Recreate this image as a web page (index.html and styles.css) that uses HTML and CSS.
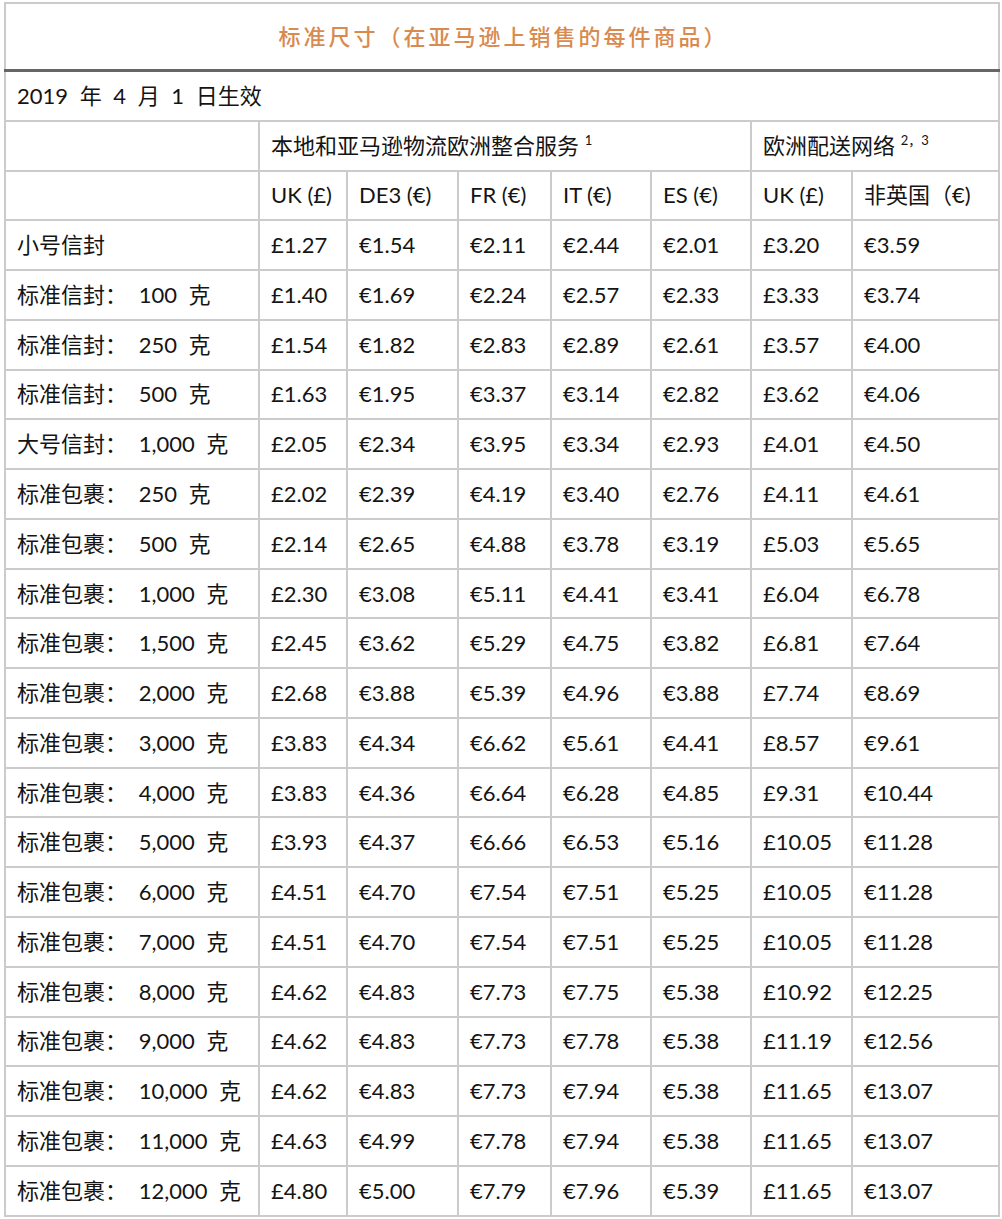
FILE: index.html
```html
<!DOCTYPE html>
<html lang="zh-CN">
<head>
<meta charset="utf-8">
<title>标准尺寸</title>
<link rel="stylesheet" href="styles.css">
</head>
<body>
<table class="fees">
<colgroup>
<col class="c-label"><col class="c-uk"><col class="c-de"><col class="c-fr"><col class="c-it"><col class="c-es"><col class="c-uk2"><col class="c-nonuk">
</colgroup>
<tbody>
<tr class="title-row"><td colspan="8" class="title">标准尺寸（在亚马逊上销售的每件商品）</td></tr>
<tr class="row"><td colspan="8">2019 年 4 月 1 日生效</td></tr>
<tr class="row"><td></td><td colspan="5">本地和亚马逊物流欧洲整合服务 <sup>1</sup></td><td colspan="2">欧洲配送网络 <sup>2，3</sup></td></tr>
<tr class="row"><td></td><td>UK (£)</td><td>DE3 (€)</td><td>FR (€)</td><td>IT (€)</td><td>ES (€)</td><td>UK (£)</td><td>非英国（€)</td></tr>
<tr class="row"><td>小号信封</td><td>£1.27</td><td>€1.54</td><td>€2.11</td><td>€2.44</td><td>€2.01</td><td>£3.20</td><td>€3.59</td></tr>
<tr class="row"><td>标准信封： 100 克</td><td>£1.40</td><td>€1.69</td><td>€2.24</td><td>€2.57</td><td>€2.33</td><td>£3.33</td><td>€3.74</td></tr>
<tr class="row"><td>标准信封： 250 克</td><td>£1.54</td><td>€1.82</td><td>€2.83</td><td>€2.89</td><td>€2.61</td><td>£3.57</td><td>€4.00</td></tr>
<tr class="row"><td>标准信封： 500 克</td><td>£1.63</td><td>€1.95</td><td>€3.37</td><td>€3.14</td><td>€2.82</td><td>£3.62</td><td>€4.06</td></tr>
<tr class="row"><td>大号信封： 1,000 克</td><td>£2.05</td><td>€2.34</td><td>€3.95</td><td>€3.34</td><td>€2.93</td><td>£4.01</td><td>€4.50</td></tr>
<tr class="row"><td>标准包裹： 250 克</td><td>£2.02</td><td>€2.39</td><td>€4.19</td><td>€3.40</td><td>€2.76</td><td>£4.11</td><td>€4.61</td></tr>
<tr class="row"><td>标准包裹： 500 克</td><td>£2.14</td><td>€2.65</td><td>€4.88</td><td>€3.78</td><td>€3.19</td><td>£5.03</td><td>€5.65</td></tr>
<tr class="row"><td>标准包裹： 1,000 克</td><td>£2.30</td><td>€3.08</td><td>€5.11</td><td>€4.41</td><td>€3.41</td><td>£6.04</td><td>€6.78</td></tr>
<tr class="row"><td>标准包裹： 1,500 克</td><td>£2.45</td><td>€3.62</td><td>€5.29</td><td>€4.75</td><td>€3.82</td><td>£6.81</td><td>€7.64</td></tr>
<tr class="row"><td>标准包裹： 2,000 克</td><td>£2.68</td><td>€3.88</td><td>€5.39</td><td>€4.96</td><td>€3.88</td><td>£7.74</td><td>€8.69</td></tr>
<tr class="row"><td>标准包裹： 3,000 克</td><td>£3.83</td><td>€4.34</td><td>€6.62</td><td>€5.61</td><td>€4.41</td><td>£8.57</td><td>€9.61</td></tr>
<tr class="row"><td>标准包裹： 4,000 克</td><td>£3.83</td><td>€4.36</td><td>€6.64</td><td>€6.28</td><td>€4.85</td><td>£9.31</td><td>€10.44</td></tr>
<tr class="row"><td>标准包裹： 5,000 克</td><td>£3.93</td><td>€4.37</td><td>€6.66</td><td>€6.53</td><td>€5.16</td><td>£10.05</td><td>€11.28</td></tr>
<tr class="row"><td>标准包裹： 6,000 克</td><td>£4.51</td><td>€4.70</td><td>€7.54</td><td>€7.51</td><td>€5.25</td><td>£10.05</td><td>€11.28</td></tr>
<tr class="row"><td>标准包裹： 7,000 克</td><td>£4.51</td><td>€4.70</td><td>€7.54</td><td>€7.51</td><td>€5.25</td><td>£10.05</td><td>€11.28</td></tr>
<tr class="row"><td>标准包裹： 8,000 克</td><td>£4.62</td><td>€4.83</td><td>€7.73</td><td>€7.75</td><td>€5.38</td><td>£10.92</td><td>€12.25</td></tr>
<tr class="row"><td>标准包裹： 9,000 克</td><td>£4.62</td><td>€4.83</td><td>€7.73</td><td>€7.78</td><td>€5.38</td><td>£11.19</td><td>€12.56</td></tr>
<tr class="row"><td>标准包裹： 10,000 克</td><td>£4.62</td><td>€4.83</td><td>€7.73</td><td>€7.94</td><td>€5.38</td><td>£11.65</td><td>€13.07</td></tr>
<tr class="row"><td>标准包裹： 11,000 克</td><td>£4.63</td><td>€4.99</td><td>€7.78</td><td>€7.94</td><td>€5.38</td><td>£11.65</td><td>€13.07</td></tr>
<tr class="row"><td>标准包裹： 12,000 克</td><td>£4.80</td><td>€5.00</td><td>€7.79</td><td>€7.96</td><td>€5.39</td><td>£11.65</td><td>€13.07</td></tr>
</tbody>
</table>
</body>
</html>
```

FILE: styles.css
```css
html, body {
  margin: 0;
  padding: 0;
  background: #ffffff;
}
body {
  padding: 2px 0 0 4px;
  font-family: Lato, "Noto Sans CJK SC", sans-serif;
  color: #141414;
}
.fees {
  border-collapse: collapse;
  table-layout: fixed;
  width: 994px;
  font-size: 22px;
}
.fees td {
  border: 2px solid #cbcbcb;
  padding: 0 0 0 11px;
  white-space: pre;
  vertical-align: middle;
  line-height: 1;
}
.c-label { width: 254px; }
.c-uk { width: 88px; }
.c-de { width: 111px; }
.c-fr { width: 93px; }
.c-it { width: 100px; }
.c-es { width: 100px; }
.c-uk2 { width: 101px; }
.c-nonuk { width: 147px; }
.title-row td {
  height: 65px;
  border-bottom: 3px solid #666666;
}
.title {
  text-align: center;
  color: #d88a4f;
  letter-spacing: 3px;
  font-weight: 500;
  text-indent: -8px;
}
.row td {
  height: 47.78px;
}
.row td:first-child {
  word-spacing: 6px;
}
sup {
  font-size: 13px;
  vertical-align: 9px;
}
```
